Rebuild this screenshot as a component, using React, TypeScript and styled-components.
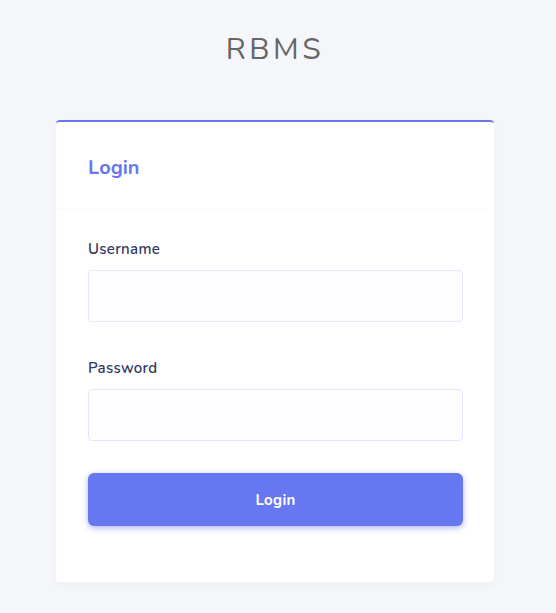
import React from "react";
import styled, { createGlobalStyle } from "styled-components";

const GlobalStyle = createGlobalStyle`
  html, body {
    margin: 0;
    padding: 0;
    background: #f4f6f9;
  }
  body {
    font-family: "Nunito", "Lato", "Noto Sans", sans-serif;
  }
  * {
    box-sizing: border-box;
  }
`;

const Page = styled.div`
  width: 556px;
  min-height: 613px;
  padding: 32px 0 0 56px;
`;

const Column = styled.div`
  width: 438px;
  display: flex;
  flex-direction: column;
`;

const Brand = styled.div`
  height: 36px;
  margin-bottom: 52px;
  text-align: center;
  font-size: 30px;
  line-height: 36px;
  letter-spacing: 3.5px;
  color: #666666;
`;

const Card = styled.div`
  background: #ffffff;
  border-top: 2px solid #6777ef;
  border-radius: 4px;
  box-shadow: 0 4px 8px rgba(0, 0, 0, 0.03);
`;

const CardHeader = styled.div`
  height: 88px;
  padding: 4px 32px 0;
  display: flex;
  align-items: center;
  border-bottom: 1px solid #f9f9f9;
`;

const CardTitle = styled.h4`
  margin: 0;
  font-size: 20px;
  font-weight: 700;
  color: #6777ef;
`;

const CardBody = styled.form`
  padding: 27px 31px 56px 32px;
  display: flex;
  flex-direction: column;
`;

const FormGroup = styled.div<{ $gap: number }>`
  display: flex;
  flex-direction: column;
  margin-bottom: ${(p) => p.$gap}px;
`;

const Label = styled.label`
  font-size: 15px;
  line-height: 25px;
  font-weight: 600;
  color: #34395e;
  letter-spacing: 0.3px;
  margin-bottom: 8px;
`;

const Input = styled.input`
  height: 52px;
  width: 100%;
  border: 1px solid #e4e6fc;
  border-radius: 4px;
  background: #fdfdff;
  padding: 0 16px;
  font-size: 16px;
  font-family: inherit;
  outline: none;
`;

const Button = styled.button`
  height: 53px;
  width: 100%;
  border: none;
  border-radius: 6px;
  background: #6777ef;
  color: #ffffff;
  font-family: inherit;
  font-size: 15px;
  font-weight: 700;
  letter-spacing: 0.3px;
  box-shadow: 0 2px 6px #acb5f6;
  cursor: pointer;
`;

const App = () => {
  return (
    <>
      <GlobalStyle />
      <Page>
        <Column>
          <Brand>RBMS</Brand>
          <Card>
            <CardHeader>
              <CardTitle>Login</CardTitle>
            </CardHeader>
            <CardBody onSubmit={(e) => e.preventDefault()}>
              <FormGroup $gap={34}>
                <Label htmlFor="username">Username</Label>
                <Input id="username" type="text" />
              </FormGroup>
              <FormGroup $gap={32}>
                <Label htmlFor="password">Password</Label>
                <Input id="password" type="password" />
              </FormGroup>
              <Button type="submit">Login</Button>
            </CardBody>
          </Card>
        </Column>
      </Page>
    </>
  );
};

export default App;
